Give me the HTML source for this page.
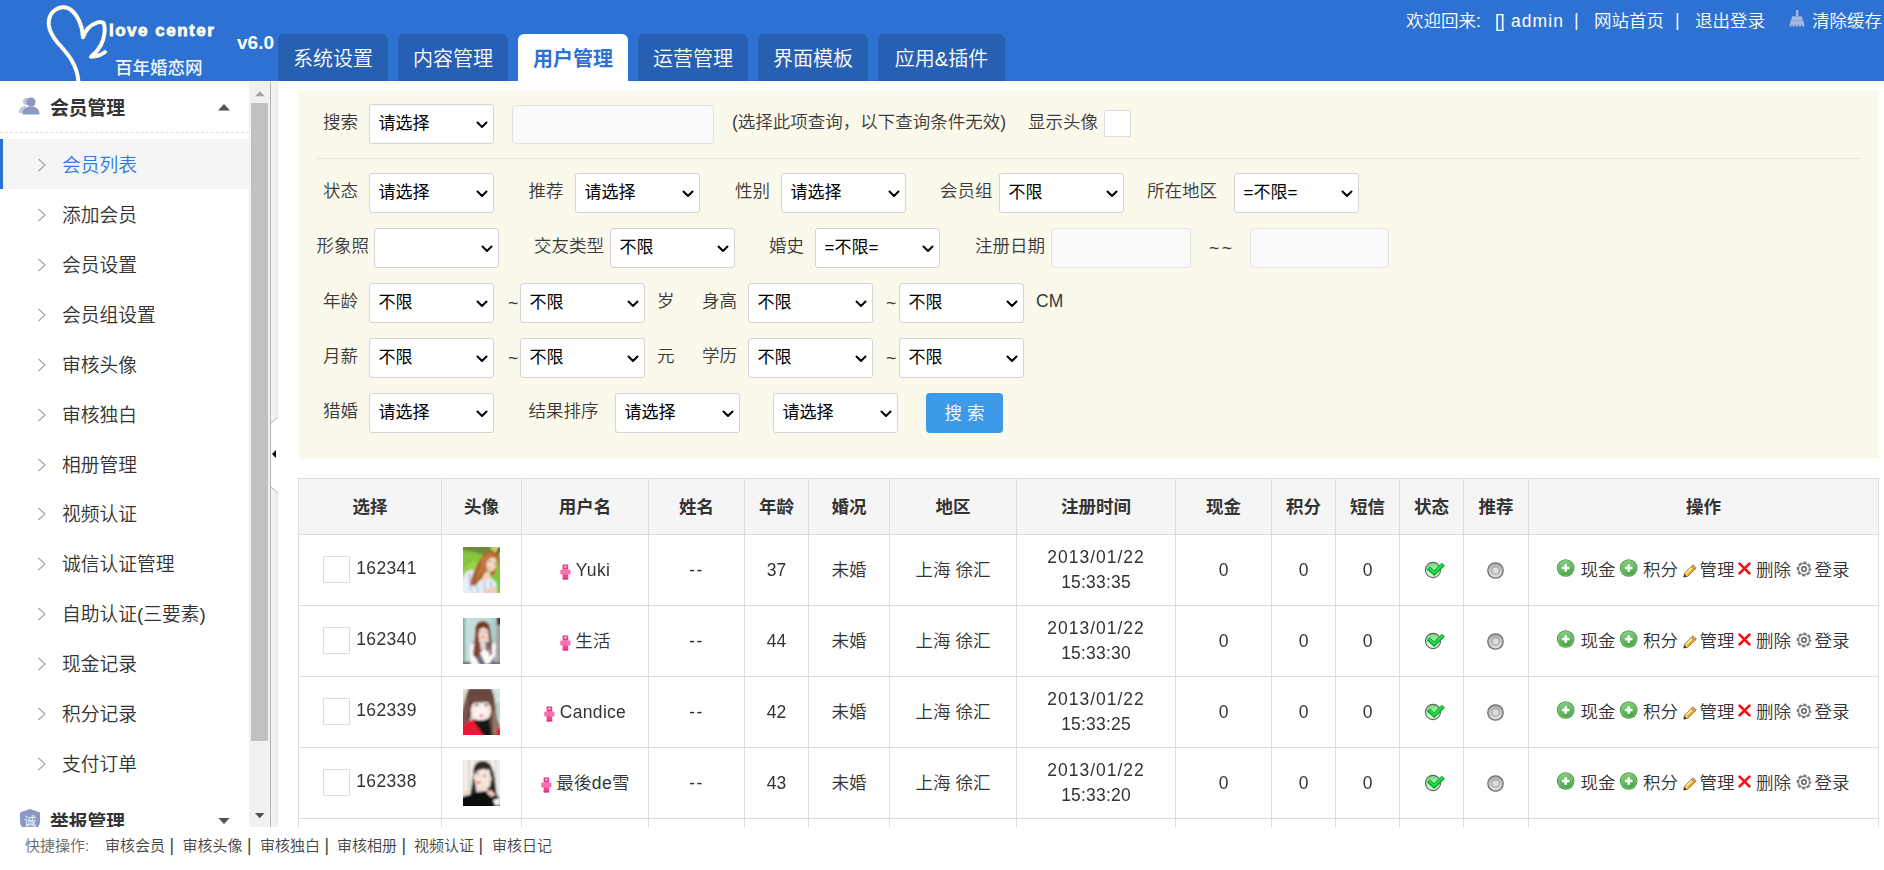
<!DOCTYPE html>
<html lang="zh-CN">
<head>
<meta charset="utf-8">
<title>百年婚恋网 - 会员管理</title>
<style>
*{box-sizing:border-box;margin:0;padding:0}
html,body{width:1884px;height:870px;overflow:hidden;background:#fff}
body{position:relative;font-family:"Liberation Sans","Noto Sans CJK SC",sans-serif;font-size:17.5px;color:#444;line-height:1;font-weight:350}
a{color:inherit;text-decoration:none}
.abs{position:absolute}
#hd{position:absolute;left:0;top:0;width:1884px;height:81px;background:#2d72d2;overflow:hidden}
#hd .tab{position:absolute;top:34px;height:47px;width:110px;background:#2760b3;color:#fff;font-size:20px;line-height:50px;text-align:center;border-radius:6px 6px 0 0;white-space:nowrap}
#hd .tab.on{background:#fff;color:#2d72d2;font-weight:bold}
#hd .top{position:absolute;top:9px;color:#fff;font-size:17.5px;line-height:24px;white-space:nowrap}
.logo1{left:109px;top:21px;font-size:17px;font-weight:bold;color:#fffcec;letter-spacing:1.5px;-webkit-text-stroke:.8px #fffcec;line-height:20px;white-space:nowrap}
.logo2{left:115px;top:57px;font-size:17.5px;font-weight:500;color:#f4f7fc;line-height:22px;white-space:nowrap}
.ver{left:237px;top:32px;font-size:19px;font-weight:bold;color:#fff;line-height:22px;white-space:nowrap}
#side{position:absolute;left:0;top:81px;width:249px;height:746px;background:#fff;overflow:hidden}
#side .tt{position:absolute;left:50px;font-size:18.75px;font-weight:bold;color:#333;line-height:28px;white-space:nowrap}
#side .it{position:absolute;left:0;width:249px;height:50px;line-height:53px;padding-left:62px;font-size:18.75px;color:#333;white-space:nowrap}
#side .it.on{background:#f5f5f5;color:#2d7be0;border-left:3px solid #2d72d2;padding-left:59px}
#side .it svg{position:absolute;left:37px;top:19px}
#side .it.on svg{left:34px}
#sb{position:absolute;left:249px;top:82px;width:21px;height:745px;background:#f1f1f1}
#sb .th{position:absolute;left:2px;top:21px;width:17px;height:638px;background:#c1c1c1}
#split{position:absolute;left:270px;top:82px;width:8px;height:745px;background:linear-gradient(to right,#f5f5f8,#e9ecf1);border-left:1px solid #b3b3b3}
#main{position:absolute;left:278px;top:81px;width:1606px;height:746px;overflow:hidden;background:#fff}
#pn{position:absolute;left:20px;top:10px;width:1581px;height:368px;background:#fbf9ec}
.lb{position:absolute;font-size:17.5px;color:#3a3a3a;line-height:24px;white-space:nowrap}
.sel{position:absolute;width:125px;height:40px;background:#fff;border:1px solid #d4d4d4;border-radius:3px;font-size:17px;color:#000;line-height:38px;font-weight:400;padding-left:8.5px;white-space:nowrap}
.sel svg{position:absolute;right:5px;top:16px}
.inp{position:absolute;height:38px;background:#fbfbfb;border:1px solid #e2e2e2;border-radius:4px}
.cb{position:absolute;width:27px;height:27px;background:#fff;border:1px solid #ddd;border-radius:2px}
.btn{position:absolute;width:77px;height:40px;background:#3d9ae8;color:#fff;border-radius:4px;font-size:17.5px;line-height:40px;text-align:center;white-space:pre}
#tb{position:absolute;left:20px;top:397px;border-collapse:collapse;table-layout:fixed;width:1580px}
#tb th,#tb td{border:1px solid #ddd;text-align:center;vertical-align:middle;font-size:17.5px;color:#333;padding:0;line-height:25px;white-space:nowrap}
#tb th{height:56px;background:#f5f5f5;font-weight:bold}
#tb td{height:71px;background:#fff}
#tb .ic{vertical-align:middle;display:inline-block}
#tb .av{vertical-align:middle;display:inline-block;overflow:hidden}
#tb .cb2{display:inline-block;width:27px;height:27px;background:#fff;border:1px solid #ddd;vertical-align:middle;margin-right:6px;position:relative;top:-1px;left:0}
#tb .uid{vertical-align:middle;letter-spacing:.35px;position:relative;top:-2px;left:0}
#tb .nm{vertical-align:middle;margin-left:5px;letter-spacing:.3px}
#tb .op a{vertical-align:middle}
#ft{position:absolute;left:0;top:827px;width:1884px;height:43px;background:#fff;font-size:15px;line-height:20px;color:#444;white-space:nowrap}
#tb th span{position:relative;top:1px}
#tb .opw{position:relative;width:349px;height:70px;text-align:left}
#tb .opw a{line-height:25px}
#tb .fem{position:relative;top:1.5px;left:.5px}
#hd .top.pipe{font-size:19px;top:7.5px;opacity:.92}
#tb .n{display:inline-block;transform:scaleY(1.09);transform-origin:50% 58%}
#tb .okk{position:relative;top:-1px;left:.5px}
#tb .grr{position:relative;top:-.5px;left:-.5px}

</style>
</head>
<body>
<svg width="0" height="0" style="position:absolute"><defs><linearGradient id="gp" x1="0" y1="0" x2="0.300" y2="1"><stop offset="0" stop-color="#8fd389"/><stop offset="1" stop-color="#4aa648"/></linearGradient><linearGradient id="gc" x1="0" y1="0" x2="0" y2="1"><stop offset="0" stop-color="#6fdc78"/><stop offset="1" stop-color="#eefaee"/></linearGradient><linearGradient id="gg" x1="0" y1="0" x2="0" y2="1"><stop offset="0" stop-color="#aaaaaa"/><stop offset="1" stop-color="#e4e4e4"/></linearGradient><filter id="bl" x="0" y="0" width="1" height="1"><feGaussianBlur stdDeviation="0.800"/></filter></defs></svg>
<div id="hd">
<svg class="abs" style="left:40px;top:0" width="80" height="81" viewBox="40 0 80 81"><path d="M78.500 82 C77 62 64 50 57.500 42.500 C53 37 49.500 31 48.800 25 C48 15 54 8.500 62 7.200 C69 6.500 75 12 79 20.500 C81.500 26 82.800 32 83 37.300 C85 31 90 25 97 22.600 C100 21.800 103 22.300 104 24 C105.500 29 104.500 38 101 45 C98 50.500 94 54.500 91 56.800 C96 56.800 101 55 105 52" fill="none" stroke="#fffcec" stroke-width="4" stroke-linecap="round" stroke-linejoin="round"/></svg>
<div class="abs logo1">love center</div>
<div class="abs logo2">百年婚恋网</div>
<div class="abs ver">v6.0</div>
<a class="tab" style="left:278px;width:110px">系统设置</a>
<a class="tab" style="left:398px;width:110px">内容管理</a>
<a class="tab on" style="left:518px;width:110px">用户管理</a>
<a class="tab" style="left:638px;width:110px">运营管理</a>
<a class="tab" style="left:758px;width:110px">界面模板</a>
<a class="tab" style="left:878px;width:127px">应用&amp;插件</a>
<div class="top" style="left:1406px">欢迎回来:</div>
<div class="top" style="left:1495px">[]</div>
<div class="top" style="left:1511px;letter-spacing:1.05px">admin</div>
<div class="top pipe" style="left:1574px">|</div>
<a class="top" style="left:1594px">网站首页</a>
<div class="top pipe" style="left:1675px">|</div>
<a class="top" style="left:1695px">退出登录</a>
<svg class="abs" style="left:1789px;top:10px" width="16" height="17" viewBox="0 0 16 17"><path d="M7 0h2.4v6H7z M3.2 6.2h9.6l1.2 4H2z M1.6 10.6h12.8l1.2 6h-2.2l-.6-3-.6 3h-2.2l-.4-3-.6 3H6.8l-.4-3-.8 3H3.4l-.2-3-.8 3H.4z" fill="#a3b8df"/></svg>
<a class="top" style="left:1812px">清除缓存</a>
</div>
<div id="side">
<svg class="abs" style="left:18px;top:15px" width="22" height="19" viewBox="0 0 22 19"><g fill="#8b97c4"><circle cx="8.5" cy="5.5" r="3.6" opacity=".55"/><path d="M1 17c0-5 3-7 7-7v7z" opacity=".55"/><circle cx="13" cy="6" r="4.6"/><path d="M4.5 18.5c0-5.5 3.5-8 8.5-8s8.500 2.500 8.500 8z"/></g></svg>
<div class="tt" style="top:14px">会员管理</div>
<svg class="abs" style="left:218px;top:23px" width="12" height="7" viewBox="0 0 12 7"><path d="M0 6.500 L6 0 L12 6.500z" fill="#555"/></svg>
<div class="abs" style="left:0;top:51px;width:249px;height:0;border-top:1px dashed #ddd"></div>
<a class="it on" style="top:58px"><svg width="10" height="14" viewBox="0 0 10 14"><path d="M1.5 1 L8 7 L1.5 13" fill="none" stroke="#a59d98" stroke-width="1.050"/></svg>会员列表</a>
<a class="it" style="top:108px"><svg width="10" height="14" viewBox="0 0 10 14"><path d="M1.5 1 L8 7 L1.5 13" fill="none" stroke="#a59d98" stroke-width="1.050"/></svg>添加会员</a>
<a class="it" style="top:158px"><svg width="10" height="14" viewBox="0 0 10 14"><path d="M1.5 1 L8 7 L1.5 13" fill="none" stroke="#a59d98" stroke-width="1.050"/></svg>会员设置</a>
<a class="it" style="top:208px"><svg width="10" height="14" viewBox="0 0 10 14"><path d="M1.5 1 L8 7 L1.5 13" fill="none" stroke="#a59d98" stroke-width="1.050"/></svg>会员组设置</a>
<a class="it" style="top:258px"><svg width="10" height="14" viewBox="0 0 10 14"><path d="M1.5 1 L8 7 L1.5 13" fill="none" stroke="#a59d98" stroke-width="1.050"/></svg>审核头像</a>
<a class="it" style="top:308px"><svg width="10" height="14" viewBox="0 0 10 14"><path d="M1.5 1 L8 7 L1.5 13" fill="none" stroke="#a59d98" stroke-width="1.050"/></svg>审核独白</a>
<a class="it" style="top:358px"><svg width="10" height="14" viewBox="0 0 10 14"><path d="M1.5 1 L8 7 L1.5 13" fill="none" stroke="#a59d98" stroke-width="1.050"/></svg>相册管理</a>
<a class="it" style="top:407px"><svg width="10" height="14" viewBox="0 0 10 14"><path d="M1.5 1 L8 7 L1.5 13" fill="none" stroke="#a59d98" stroke-width="1.050"/></svg>视频认证</a>
<a class="it" style="top:457px"><svg width="10" height="14" viewBox="0 0 10 14"><path d="M1.5 1 L8 7 L1.5 13" fill="none" stroke="#a59d98" stroke-width="1.050"/></svg>诚信认证管理</a>
<a class="it" style="top:507px"><svg width="10" height="14" viewBox="0 0 10 14"><path d="M1.5 1 L8 7 L1.5 13" fill="none" stroke="#a59d98" stroke-width="1.050"/></svg>自助认证(三要素)</a>
<a class="it" style="top:557px"><svg width="10" height="14" viewBox="0 0 10 14"><path d="M1.5 1 L8 7 L1.5 13" fill="none" stroke="#a59d98" stroke-width="1.050"/></svg>现金记录</a>
<a class="it" style="top:607px"><svg width="10" height="14" viewBox="0 0 10 14"><path d="M1.5 1 L8 7 L1.5 13" fill="none" stroke="#a59d98" stroke-width="1.050"/></svg>积分记录</a>
<a class="it" style="top:657px"><svg width="10" height="14" viewBox="0 0 10 14"><path d="M1.5 1 L8 7 L1.5 13" fill="none" stroke="#a59d98" stroke-width="1.050"/></svg>支付订单</a>
 <svg class="abs" style="left:19px;top:728px" width="22" height="24" viewBox="0 0 22 24"><path d="M11 0 L21 3.500 V12 C21 18 16 22 11 24 C6 22 1 18 1 12 V3.500z" fill="#8b97c4"/><text x="11" y="17" font-size="12" fill="#fff" text-anchor="middle" font-family="Liberation Sans, Noto Sans CJK SC, sans-serif">诚</text></svg>
<div class="tt" style="top:728px">举报管理</div>
<svg class="abs" style="left:218px;top:737px" width="12" height="7" viewBox="0 0 12 7"><path d="M0.300 0 L11.700 0 L6 6z" fill="#555"/></svg>
</div>
<div id="sb"><svg class="abs" style="left:5.500px;top:9px" width="10" height="6" viewBox="0 0 10 6"><path d="M0.200 5.200 L4.900 0.200 L9.600 5.200z" fill="#a3a3a3"/></svg><div class="th"></div><svg class="abs" style="left:6px;top:731px" width="10" height="6" viewBox="0 0 10 6"><path d="M0 0 L9.400 0 L4.700 5.300z" fill="#505050"/></svg></div>
<div id="split"><svg class="abs" style="left:0;top:335px" width="7" height="76" viewBox="0 0 7 76"><path d="M0 6 L7 0 V76 L0 70z" fill="#fff"/><path d="M0 6 L7 0 M0 70 L7 76" stroke="#a9b7c6" stroke-width="1" fill="none"/><path d="M1 37 L5 33 V41z" fill="#000"/></svg></div>
<div id="main">
<div id="pn"></div>
<div class="lb" style="left:45px;top:29px;">搜索</div>
<div class="sel" style="left:91px;top:23px;width:125px">请选择<svg width="12" height="8" viewBox="0 0 12 8"><path d="M1.5 1.5 L6 6 L10.5 1.5" fill="none" stroke="#000" stroke-width="2" stroke-linecap="round" stroke-linejoin="round"/></svg></div>
<div class="inp" style="left:234px;top:24px;width:202px;height:39px"></div>
<div class="lb" style="left:454px;top:29px;">(选择此项查询，以下查询条件无效)</div>
<div class="lb" style="left:750px;top:29px;">显示头像</div>
<div class="cb" style="left:826px;top:29px"></div>
<div class="abs" style="left:39px;top:77px;width:1544px;height:1px;background:#e8e6dc"></div>
<div class="lb" style="left:45px;top:98px;">状态</div>
<div class="sel" style="left:91px;top:92px;width:125px">请选择<svg width="12" height="8" viewBox="0 0 12 8"><path d="M1.5 1.5 L6 6 L10.5 1.5" fill="none" stroke="#000" stroke-width="2" stroke-linecap="round" stroke-linejoin="round"/></svg></div>
<div class="lb" style="left:250.5px;top:98px;">推荐</div>
<div class="sel" style="left:297px;top:92px;width:125px">请选择<svg width="12" height="8" viewBox="0 0 12 8"><path d="M1.5 1.5 L6 6 L10.5 1.5" fill="none" stroke="#000" stroke-width="2" stroke-linecap="round" stroke-linejoin="round"/></svg></div>
<div class="lb" style="left:457px;top:98px;">性别</div>
<div class="sel" style="left:503px;top:92px;width:125px">请选择<svg width="12" height="8" viewBox="0 0 12 8"><path d="M1.5 1.5 L6 6 L10.5 1.5" fill="none" stroke="#000" stroke-width="2" stroke-linecap="round" stroke-linejoin="round"/></svg></div>
<div class="lb" style="left:662px;top:98px;">会员组</div>
<div class="sel" style="left:721px;top:92px;width:125px">不限<svg width="12" height="8" viewBox="0 0 12 8"><path d="M1.5 1.5 L6 6 L10.5 1.5" fill="none" stroke="#000" stroke-width="2" stroke-linecap="round" stroke-linejoin="round"/></svg></div>
<div class="lb" style="left:869px;top:98px;">所在地区</div>
<div class="sel" style="left:956px;top:92px;width:125px">=不限=<svg width="12" height="8" viewBox="0 0 12 8"><path d="M1.5 1.5 L6 6 L10.5 1.5" fill="none" stroke="#000" stroke-width="2" stroke-linecap="round" stroke-linejoin="round"/></svg></div>
<div class="lb" style="left:38.5px;top:153px;">形象照</div>
<div class="sel" style="left:96px;top:147px;width:125px"><svg width="12" height="8" viewBox="0 0 12 8"><path d="M1.5 1.5 L6 6 L10.5 1.5" fill="none" stroke="#000" stroke-width="2" stroke-linecap="round" stroke-linejoin="round"/></svg></div>
<div class="lb" style="left:256px;top:153px;">交友类型</div>
<div class="sel" style="left:332px;top:147px;width:125px">不限<svg width="12" height="8" viewBox="0 0 12 8"><path d="M1.5 1.5 L6 6 L10.5 1.5" fill="none" stroke="#000" stroke-width="2" stroke-linecap="round" stroke-linejoin="round"/></svg></div>
<div class="lb" style="left:491px;top:153px;">婚史</div>
<div class="sel" style="left:537px;top:147px;width:125px">=不限=<svg width="12" height="8" viewBox="0 0 12 8"><path d="M1.5 1.5 L6 6 L10.5 1.5" fill="none" stroke="#000" stroke-width="2" stroke-linecap="round" stroke-linejoin="round"/></svg></div>
<div class="lb" style="left:697px;top:153px;">注册日期</div>
<div class="inp" style="left:773px;top:147px;width:140px;height:40px"></div>
<div class="lb" style="left:931px;top:155px;letter-spacing:2.5px">~~</div>
<div class="inp" style="left:972px;top:147px;width:139px;height:40px"></div>
<div class="lb" style="left:45px;top:208px;">年龄</div>
<div class="sel" style="left:91px;top:202px;width:125px">不限<svg width="12" height="8" viewBox="0 0 12 8"><path d="M1.5 1.5 L6 6 L10.5 1.5" fill="none" stroke="#000" stroke-width="2" stroke-linecap="round" stroke-linejoin="round"/></svg></div>
<div class="lb" style="left:230px;top:210px;">~</div>
<div class="sel" style="left:242px;top:202px;width:125px">不限<svg width="12" height="8" viewBox="0 0 12 8"><path d="M1.5 1.5 L6 6 L10.5 1.5" fill="none" stroke="#000" stroke-width="2" stroke-linecap="round" stroke-linejoin="round"/></svg></div>
<div class="lb" style="left:379px;top:208px;">岁</div>
<div class="lb" style="left:424px;top:208px;">身高</div>
<div class="sel" style="left:470px;top:202px;width:125px">不限<svg width="12" height="8" viewBox="0 0 12 8"><path d="M1.5 1.5 L6 6 L10.5 1.5" fill="none" stroke="#000" stroke-width="2" stroke-linecap="round" stroke-linejoin="round"/></svg></div>
<div class="lb" style="left:608px;top:210px;">~</div>
<div class="sel" style="left:621px;top:202px;width:125px">不限<svg width="12" height="8" viewBox="0 0 12 8"><path d="M1.5 1.5 L6 6 L10.5 1.5" fill="none" stroke="#000" stroke-width="2" stroke-linecap="round" stroke-linejoin="round"/></svg></div>
<div class="lb" style="left:758px;top:208px;">CM</div>
<div class="lb" style="left:45px;top:263px;">月薪</div>
<div class="sel" style="left:91px;top:257px;width:125px">不限<svg width="12" height="8" viewBox="0 0 12 8"><path d="M1.5 1.5 L6 6 L10.5 1.5" fill="none" stroke="#000" stroke-width="2" stroke-linecap="round" stroke-linejoin="round"/></svg></div>
<div class="lb" style="left:230px;top:265px;">~</div>
<div class="sel" style="left:242px;top:257px;width:125px">不限<svg width="12" height="8" viewBox="0 0 12 8"><path d="M1.5 1.5 L6 6 L10.5 1.5" fill="none" stroke="#000" stroke-width="2" stroke-linecap="round" stroke-linejoin="round"/></svg></div>
<div class="lb" style="left:379px;top:263px;">元</div>
<div class="lb" style="left:424px;top:263px;">学历</div>
<div class="sel" style="left:470px;top:257px;width:125px">不限<svg width="12" height="8" viewBox="0 0 12 8"><path d="M1.5 1.5 L6 6 L10.5 1.5" fill="none" stroke="#000" stroke-width="2" stroke-linecap="round" stroke-linejoin="round"/></svg></div>
<div class="lb" style="left:608px;top:265px;">~</div>
<div class="sel" style="left:621px;top:257px;width:125px">不限<svg width="12" height="8" viewBox="0 0 12 8"><path d="M1.5 1.5 L6 6 L10.5 1.5" fill="none" stroke="#000" stroke-width="2" stroke-linecap="round" stroke-linejoin="round"/></svg></div>
<div class="lb" style="left:45px;top:318px;">猎婚</div>
<div class="sel" style="left:91px;top:312px;width:125px">请选择<svg width="12" height="8" viewBox="0 0 12 8"><path d="M1.5 1.5 L6 6 L10.5 1.5" fill="none" stroke="#000" stroke-width="2" stroke-linecap="round" stroke-linejoin="round"/></svg></div>
<div class="lb" style="left:250.5px;top:318px;">结果排序</div>
<div class="sel" style="left:337px;top:312px;width:125px">请选择<svg width="12" height="8" viewBox="0 0 12 8"><path d="M1.5 1.5 L6 6 L10.5 1.5" fill="none" stroke="#000" stroke-width="2" stroke-linecap="round" stroke-linejoin="round"/></svg></div>
<div class="sel" style="left:495px;top:312px;width:125px">请选择<svg width="12" height="8" viewBox="0 0 12 8"><path d="M1.5 1.5 L6 6 L10.5 1.5" fill="none" stroke="#000" stroke-width="2" stroke-linecap="round" stroke-linejoin="round"/></svg></div>
<div class="btn" style="left:648px;top:312px">搜 索</div>
<table id="tb"><colgroup><col style="width:143px"><col style="width:80px"><col style="width:127px"><col style="width:96px"><col style="width:64px"><col style="width:81px"><col style="width:127px"><col style="width:159px"><col style="width:96px"><col style="width:64px"><col style="width:64px"><col style="width:64px"><col style="width:65px"><col style="width:350px"></colgroup>
<tr><th><span>选择</span></th><th><span>头像</span></th><th><span>用户名</span></th><th><span>姓名</span></th><th><span>年龄</span></th><th><span>婚况</span></th><th><span>地区</span></th><th><span>注册时间</span></th><th><span>现金</span></th><th><span>积分</span></th><th><span>短信</span></th><th><span>状态</span></th><th><span>推荐</span></th><th><span>操作</span></th></tr>
<tr><td><span class="cb2"></span><span class="uid n">162341</span></td><td><svg class="av" width="37" height="46" viewBox="0 0 37 46"><g filter="url(#bl)"><rect x="-2" y="-2" width="41" height="50" fill="#86c53d"/><path d="M-2 -2 H39 V7 L24 9 L10 5 L-2 3z" fill="#6f8a38"/><path d="M26 -2 H39 V10 L30 4z" fill="#cfd066"/><path d="M37 -1 L33 6 L35 8 L38 2z" fill="#141410"/><path d="M0 22 L12 12 L16 22 L4 32z" fill="#9ad24a"/><path d="M30 28 H39 V48 H30z" fill="#7ccc3a"/><path d="M2 26 C6 22 12 22 14 26 L18 33 L28 31 L33 35 L34 48 H-2 V34z" fill="#e6eef4"/><path d="M6 26 L8 44 M13 30 L15 46 M21 34 L22 46 M28 34 L29 46" stroke="#a9c9e2" stroke-width="1.600" fill="none"/><path d="M17 26 L27 25 L28 32 L19 34z" fill="#f4d3be"/><path d="M22 42 L34 40 L34 47 L22 47z" fill="#f0cdb8"/><path d="M22 5 L30 4 L36 9 L36 15 L33 21 L31 28 L28 30 L27 24 L24 22 L19 31 L12 39 L7 38 L9 29 L15 16z" fill="#b3622e"/><path d="M24 8 L14 30 M27 9 L19 26 M21 10 L11 34" stroke="#d08a52" stroke-width="1.300" fill="none"/><path d="M18 16 L10 36 M29 7 L25 18" stroke="#8a4820" stroke-width="1.200" fill="none"/><ellipse cx="28.600" cy="17" rx="4.900" ry="7.400" transform="rotate(14 28.600 17)" fill="#f7dcc9"/><path d="M22 8 L30 6 L33 11 L27 11 L23 16z" fill="#c07a3e"/><circle cx="27" cy="14.600" r=".8" fill="#4a2a20"/><circle cx="31.600" cy="16.400" r=".8" fill="#4a2a20"/><ellipse cx="26.600" cy="21.300" rx="1.600" ry=".7" fill="#e88a8a"/></g></svg></td><td><svg class="ic fem" width="11" height="16" viewBox="0 0 11 16"><rect x="2.6" y="0.400" width="5.600" height="5.400" rx=".8" fill="#e23a8c"/><rect x="4.200" y="1.700" width="2.400" height="1.800" rx=".6" fill="#ffd9ea"/><rect x="0.300" y="5.400" width="10.200" height="5.200" rx="1" fill="#f970b2"/><rect x="2.600" y="10.200" width="5.600" height="5.200" rx=".6" fill="#ec4797"/><rect x="2.600" y="14.200" width="5.600" height="1.200" fill="#dc2f80"/></svg><span class="nm n">Yuki</span></td><td><span class="n" style="letter-spacing:1.5px">--</span></td><td><span class="n">37</span></td><td>未婚</td><td>上海 徐汇</td><td><span class="n" style="letter-spacing:1px">2013/01/22</span><br><span class="n" style="letter-spacing:.2px">15:33:35</span></td><td><span class="n">0</span></td><td><span class="n">0</span></td><td><span class="n">0</span></td><td><svg class="ic okk" width="25" height="18" viewBox="0 0 25 18"><circle cx="13" cy="9" r="7.600" fill="url(#gc)" stroke="#5d685d" stroke-width="1.100"/><path d="M8.300 6.700 L14.200 12.200 L23.400 3.200" fill="none" stroke="#1d8f35" stroke-width="4.200"/><path d="M8.900 6.900 L14.200 11.800 L22.800 3.400" fill="none" stroke="#0fe640" stroke-width="2.300"/></svg></td><td><svg class="ic grr" width="17" height="17" viewBox="0 0 17 17"><circle cx="8.500" cy="8.500" r="7.700" fill="url(#gg)" stroke="#6f6f6f" stroke-width="1.300"/><circle cx="8.500" cy="8.500" r="3.700" fill="#dedede" stroke="#aeaeae" stroke-width="1.300"/></svg></td><td class="op"><div class="opw"><svg class="abs" style="left:27px;top:24px" width="20" height="19" viewBox="0 0 20 19"><circle cx="9.700" cy="9" r="8.800" fill="#4a9a47"/><circle cx="9.700" cy="9" r="7.500" fill="url(#gp)"/><circle cx="9.700" cy="9" r="7.500" fill="none" stroke="#a5dc9f" stroke-width=".7" opacity=".7"/><path d="M8.400 5.200h2.600v2.500h2.500v2.600h-2.500v2.500h-2.600v-2.500h-2.500v-2.600h2.500z" fill="#fff"/></svg><a class="abs" style="left:51.5px;top:23px">现金</a><svg class="abs" style="left:90px;top:24px" width="20" height="19" viewBox="0 0 20 19"><circle cx="9.700" cy="9" r="8.800" fill="#4a9a47"/><circle cx="9.700" cy="9" r="7.500" fill="url(#gp)"/><circle cx="9.700" cy="9" r="7.500" fill="none" stroke="#a5dc9f" stroke-width=".7" opacity=".7"/><path d="M8.400 5.200h2.600v2.500h2.500v2.600h-2.500v2.500h-2.600v-2.500h-2.500v-2.600h2.500z" fill="#fff"/></svg><a class="abs" style="left:114px;top:23px">积分</a><svg class="abs" style="left:153.5px;top:28.5px" width="14" height="14" viewBox="0 0 14 14"><path d="M0.800 13 L1.600 9.200 L8.600 2.200 L11.800 5.400 L4.800 12.300z" fill="#f5c44c" stroke="#9a7324" stroke-width="1"/><path d="M3 9.400 L8.800 3.600" stroke="#fff4c4" stroke-width="1.300"/><path d="M4.600 11 L10.400 5.200" stroke="#e6a52e" stroke-width="1.200"/><path d="M8.600 2.200 L10.100 0.800 L13.200 3.900 L11.800 5.400z" fill="#f2a9a0" stroke="#9a7324" stroke-width=".9"/><path d="M0.700 13.200 L1.500 10.200 L3.700 12.400z" fill="#2e2e22"/></svg><a class="abs" style="left:170.5px;top:23px">管理</a><svg class="abs" style="left:208.8px;top:27px" width="13" height="13" viewBox="0 0 13 13"><path d="M1.600 1.600 L11.400 11.400 M11.400 1.600 L1.600 11.400" stroke="#fb0d14" stroke-width="2.700" stroke-linecap="round"/></svg><a class="abs" style="left:227px;top:23px">删除</a><svg class="abs" style="left:266.5px;top:26.3px" width="16" height="16" viewBox="0 0 16 16"><circle cx="8" cy="8" r="6.400" fill="none" stroke="#7c7c7c" stroke-width="2" stroke-dasharray="3.300 1.730" stroke-dashoffset="1.600"/><circle cx="8" cy="8" r="5.500" fill="#f6f6f6" stroke="#6e6e6e" stroke-width="1"/><circle cx="8" cy="8" r="2.200" fill="#fdfdfd" stroke="#5a5a5a" stroke-width="1.400"/></svg><a class="abs" style="left:285.5px;top:23px">登录</a></div></td></tr>
<tr><td><span class="cb2"></span><span class="uid n">162340</span></td><td><svg class="av" width="37" height="46" viewBox="0 0 37 46"><g filter="url(#bl)"><rect x="-2" y="-2" width="41" height="50" fill="#b9d8d4"/><rect x="-2" y="-2" width="4" height="50" fill="#88a9a6"/><rect x="3" y="1" width="22" height="40" fill="#c6e0dc"/><rect x="27" y="-2" width="6" height="26" fill="#a9d2cd"/><rect x="33" y="-2" width="6" height="50" fill="#a3a39d"/><rect x="34" y="-2" width="5" height="9" fill="#3a3030"/><path d="M-2 44 H39 V48 H-2z" fill="#6f6a66"/><path d="M9 24 L30 24 L32 48 H8z" fill="#6f6c7d"/><path d="M7 27 L12 24 L13 40 L17 48 H8 L7 38z" fill="#fbf9fa"/><path d="M28 24 L33 27 L32 37 L28 44 L23 47 L17 35 L21 31 L26 34z" fill="#fbf9fa"/><path d="M20 3 C13 3 12 9 12 15 L11 27 L10 37 L13 40 L17 37 L16 23 L16 13 L25 12 L26 23 L27 31 L26 38 L29 36 L29 24 L27 10 C26 5 24 3 20 3z" fill="#7b3d29"/><path d="M13 14 L12 36 M27 14 L28 34" stroke="#9a5038" stroke-width="1.300" fill="none"/><ellipse cx="20.300" cy="16" rx="4.900" ry="6.600" fill="#f6d8cb"/><path d="M14 12 C16 5 25 5 27 12 C23 8 18 9 14 12z" fill="#6a3424"/><path d="M17 23 L22 22 L23 31 L18 32z" fill="#f4d2c2"/><circle cx="17.800" cy="13.800" r=".8" fill="#4a5a7a"/><circle cx="22.600" cy="13.800" r=".8" fill="#4a5a7a"/><ellipse cx="20" cy="19.300" rx="1.700" ry=".7" fill="#d85a6a"/></g></svg></td><td><svg class="ic fem" width="11" height="16" viewBox="0 0 11 16"><rect x="2.6" y="0.400" width="5.600" height="5.400" rx=".8" fill="#e23a8c"/><rect x="4.200" y="1.700" width="2.400" height="1.800" rx=".6" fill="#ffd9ea"/><rect x="0.300" y="5.400" width="10.200" height="5.200" rx="1" fill="#f970b2"/><rect x="2.600" y="10.200" width="5.600" height="5.200" rx=".6" fill="#ec4797"/><rect x="2.600" y="14.200" width="5.600" height="1.200" fill="#dc2f80"/></svg><span class="nm">生活</span></td><td><span class="n" style="letter-spacing:1.5px">--</span></td><td><span class="n">44</span></td><td>未婚</td><td>上海 徐汇</td><td><span class="n" style="letter-spacing:1px">2013/01/22</span><br><span class="n" style="letter-spacing:.2px">15:33:30</span></td><td><span class="n">0</span></td><td><span class="n">0</span></td><td><span class="n">0</span></td><td><svg class="ic okk" width="25" height="18" viewBox="0 0 25 18"><circle cx="13" cy="9" r="7.600" fill="url(#gc)" stroke="#5d685d" stroke-width="1.100"/><path d="M8.300 6.700 L14.200 12.200 L23.400 3.200" fill="none" stroke="#1d8f35" stroke-width="4.200"/><path d="M8.900 6.900 L14.200 11.800 L22.800 3.400" fill="none" stroke="#0fe640" stroke-width="2.300"/></svg></td><td><svg class="ic grr" width="17" height="17" viewBox="0 0 17 17"><circle cx="8.500" cy="8.500" r="7.700" fill="url(#gg)" stroke="#6f6f6f" stroke-width="1.300"/><circle cx="8.500" cy="8.500" r="3.700" fill="#dedede" stroke="#aeaeae" stroke-width="1.300"/></svg></td><td class="op"><div class="opw"><svg class="abs" style="left:27px;top:24px" width="20" height="19" viewBox="0 0 20 19"><circle cx="9.700" cy="9" r="8.800" fill="#4a9a47"/><circle cx="9.700" cy="9" r="7.500" fill="url(#gp)"/><circle cx="9.700" cy="9" r="7.500" fill="none" stroke="#a5dc9f" stroke-width=".7" opacity=".7"/><path d="M8.400 5.200h2.600v2.500h2.500v2.600h-2.500v2.500h-2.600v-2.500h-2.500v-2.600h2.500z" fill="#fff"/></svg><a class="abs" style="left:51.5px;top:23px">现金</a><svg class="abs" style="left:90px;top:24px" width="20" height="19" viewBox="0 0 20 19"><circle cx="9.700" cy="9" r="8.800" fill="#4a9a47"/><circle cx="9.700" cy="9" r="7.500" fill="url(#gp)"/><circle cx="9.700" cy="9" r="7.500" fill="none" stroke="#a5dc9f" stroke-width=".7" opacity=".7"/><path d="M8.400 5.200h2.600v2.500h2.500v2.600h-2.500v2.500h-2.600v-2.500h-2.500v-2.600h2.500z" fill="#fff"/></svg><a class="abs" style="left:114px;top:23px">积分</a><svg class="abs" style="left:153.5px;top:28.5px" width="14" height="14" viewBox="0 0 14 14"><path d="M0.800 13 L1.600 9.200 L8.600 2.200 L11.800 5.400 L4.800 12.300z" fill="#f5c44c" stroke="#9a7324" stroke-width="1"/><path d="M3 9.400 L8.800 3.600" stroke="#fff4c4" stroke-width="1.300"/><path d="M4.600 11 L10.400 5.200" stroke="#e6a52e" stroke-width="1.200"/><path d="M8.600 2.200 L10.100 0.800 L13.200 3.900 L11.800 5.400z" fill="#f2a9a0" stroke="#9a7324" stroke-width=".9"/><path d="M0.700 13.200 L1.500 10.200 L3.700 12.400z" fill="#2e2e22"/></svg><a class="abs" style="left:170.5px;top:23px">管理</a><svg class="abs" style="left:208.8px;top:27px" width="13" height="13" viewBox="0 0 13 13"><path d="M1.600 1.600 L11.400 11.400 M11.400 1.600 L1.600 11.400" stroke="#fb0d14" stroke-width="2.700" stroke-linecap="round"/></svg><a class="abs" style="left:227px;top:23px">删除</a><svg class="abs" style="left:266.5px;top:26.3px" width="16" height="16" viewBox="0 0 16 16"><circle cx="8" cy="8" r="6.400" fill="none" stroke="#7c7c7c" stroke-width="2" stroke-dasharray="3.300 1.730" stroke-dashoffset="1.600"/><circle cx="8" cy="8" r="5.500" fill="#f6f6f6" stroke="#6e6e6e" stroke-width="1"/><circle cx="8" cy="8" r="2.200" fill="#fdfdfd" stroke="#5a5a5a" stroke-width="1.400"/></svg><a class="abs" style="left:285.5px;top:23px">登录</a></div></td></tr>
<tr><td><span class="cb2"></span><span class="uid n">162339</span></td><td><svg class="av" width="37" height="46" viewBox="0 0 37 46"><g filter="url(#bl)"><rect x="-2" y="-2" width="41" height="50" fill="#cfe4da"/><rect x="-2" y="-2" width="8" height="24" fill="#d8dccf"/><path d="M32 14 L38 13 L38 30 L33 28z" fill="#b6d6c8"/><path d="M6 -1 L28 -1 C33 8 32 20 34 30 L38 40 L38 48 L22 48 L26 30 L24 16 L10 14 L8 28 L4 36 L-2 38 L-2 28 C1 14 3 6 6 -1z" fill="#6a4740"/><path d="M30 20 L37 36 L37 44 L30 46z" fill="#9a7a70"/><path d="M4 10 L2 34 M31 12 L34 40" stroke="#8a645a" stroke-width="1.600" fill="none"/><ellipse cx="18" cy="21.500" rx="10.200" ry="11.400" fill="#f9e7e1"/><ellipse cx="18" cy="23" rx="7" ry="7" fill="#fdf1ec"/><path d="M7 17 C8 4 28 3 30 16 C25 10 12 11 7 17z" fill="#5f3f38"/><path d="M9 8 L27 7 L28 13 L9 14z" fill="#6e4a42"/><ellipse cx="13.600" cy="16" rx="1.900" ry="1" fill="#3a2a2a"/><ellipse cx="23.200" cy="16" rx="1.900" ry="1" fill="#3a2a2a"/><ellipse cx="18.400" cy="26.700" rx="2.400" ry="1" fill="#e2506c"/><path d="M10 30 C14 32 22 32 26 29 L29 48 L19 48 L12 36z" fill="#151218"/><path d="M-2 38 L9 30 L22 48 L-2 48z" fill="#ee1532"/><path d="M34 38 L39 41 V48 H33z" fill="#e8182f"/></g></svg></td><td><svg class="ic fem" width="11" height="16" viewBox="0 0 11 16"><rect x="2.6" y="0.400" width="5.600" height="5.400" rx=".8" fill="#e23a8c"/><rect x="4.200" y="1.700" width="2.400" height="1.800" rx=".6" fill="#ffd9ea"/><rect x="0.300" y="5.400" width="10.200" height="5.200" rx="1" fill="#f970b2"/><rect x="2.600" y="10.200" width="5.600" height="5.200" rx=".6" fill="#ec4797"/><rect x="2.600" y="14.200" width="5.600" height="1.200" fill="#dc2f80"/></svg><span class="nm n">Candice</span></td><td><span class="n" style="letter-spacing:1.5px">--</span></td><td><span class="n">42</span></td><td>未婚</td><td>上海 徐汇</td><td><span class="n" style="letter-spacing:1px">2013/01/22</span><br><span class="n" style="letter-spacing:.2px">15:33:25</span></td><td><span class="n">0</span></td><td><span class="n">0</span></td><td><span class="n">0</span></td><td><svg class="ic okk" width="25" height="18" viewBox="0 0 25 18"><circle cx="13" cy="9" r="7.600" fill="url(#gc)" stroke="#5d685d" stroke-width="1.100"/><path d="M8.300 6.700 L14.200 12.200 L23.400 3.200" fill="none" stroke="#1d8f35" stroke-width="4.200"/><path d="M8.900 6.900 L14.200 11.800 L22.800 3.400" fill="none" stroke="#0fe640" stroke-width="2.300"/></svg></td><td><svg class="ic grr" width="17" height="17" viewBox="0 0 17 17"><circle cx="8.500" cy="8.500" r="7.700" fill="url(#gg)" stroke="#6f6f6f" stroke-width="1.300"/><circle cx="8.500" cy="8.500" r="3.700" fill="#dedede" stroke="#aeaeae" stroke-width="1.300"/></svg></td><td class="op"><div class="opw"><svg class="abs" style="left:27px;top:24px" width="20" height="19" viewBox="0 0 20 19"><circle cx="9.700" cy="9" r="8.800" fill="#4a9a47"/><circle cx="9.700" cy="9" r="7.500" fill="url(#gp)"/><circle cx="9.700" cy="9" r="7.500" fill="none" stroke="#a5dc9f" stroke-width=".7" opacity=".7"/><path d="M8.400 5.200h2.600v2.500h2.500v2.600h-2.500v2.500h-2.600v-2.500h-2.500v-2.600h2.500z" fill="#fff"/></svg><a class="abs" style="left:51.5px;top:23px">现金</a><svg class="abs" style="left:90px;top:24px" width="20" height="19" viewBox="0 0 20 19"><circle cx="9.700" cy="9" r="8.800" fill="#4a9a47"/><circle cx="9.700" cy="9" r="7.500" fill="url(#gp)"/><circle cx="9.700" cy="9" r="7.500" fill="none" stroke="#a5dc9f" stroke-width=".7" opacity=".7"/><path d="M8.400 5.200h2.600v2.500h2.500v2.600h-2.500v2.500h-2.600v-2.500h-2.500v-2.600h2.500z" fill="#fff"/></svg><a class="abs" style="left:114px;top:23px">积分</a><svg class="abs" style="left:153.5px;top:28.5px" width="14" height="14" viewBox="0 0 14 14"><path d="M0.800 13 L1.600 9.200 L8.600 2.200 L11.800 5.400 L4.800 12.300z" fill="#f5c44c" stroke="#9a7324" stroke-width="1"/><path d="M3 9.400 L8.800 3.600" stroke="#fff4c4" stroke-width="1.300"/><path d="M4.600 11 L10.400 5.200" stroke="#e6a52e" stroke-width="1.200"/><path d="M8.600 2.200 L10.100 0.800 L13.200 3.900 L11.800 5.400z" fill="#f2a9a0" stroke="#9a7324" stroke-width=".9"/><path d="M0.700 13.200 L1.500 10.200 L3.700 12.400z" fill="#2e2e22"/></svg><a class="abs" style="left:170.5px;top:23px">管理</a><svg class="abs" style="left:208.8px;top:27px" width="13" height="13" viewBox="0 0 13 13"><path d="M1.600 1.600 L11.400 11.400 M11.400 1.600 L1.600 11.400" stroke="#fb0d14" stroke-width="2.700" stroke-linecap="round"/></svg><a class="abs" style="left:227px;top:23px">删除</a><svg class="abs" style="left:266.5px;top:26.3px" width="16" height="16" viewBox="0 0 16 16"><circle cx="8" cy="8" r="6.400" fill="none" stroke="#7c7c7c" stroke-width="2" stroke-dasharray="3.300 1.730" stroke-dashoffset="1.600"/><circle cx="8" cy="8" r="5.500" fill="#f6f6f6" stroke="#6e6e6e" stroke-width="1"/><circle cx="8" cy="8" r="2.200" fill="#fdfdfd" stroke="#5a5a5a" stroke-width="1.400"/></svg><a class="abs" style="left:285.5px;top:23px">登录</a></div></td></tr>
<tr><td><span class="cb2"></span><span class="uid n">162338</span></td><td><svg class="av" width="37" height="46" viewBox="0 0 37 46"><g filter="url(#bl)"><rect x="-2" y="-2" width="41" height="50" fill="#e9e5de"/><path d="M3 -2 V34 M9 -2 V20 M30 -2 V20 M35 -2 V34" stroke="#f7f5f1" stroke-width="2.400"/><path d="M6 -2 V30 M33 -2 V30" stroke="#d5d0c8" stroke-width="1.400"/><path d="M20 1 C12 1 10 7 10 15 L9 25 L7 35 L3 48 L17 48 L14 35 L12 21 L26 8 L28 18 L27 26 L23 30 L28 32 L34 35 C32 25 32 14 29 8 C27 3 24 1 20 1z" fill="#2f2523"/><ellipse cx="19" cy="18.200" rx="8" ry="10.400" transform="rotate(-12 19 18.200)" fill="#f7e5dd"/><path d="M11 14 C13 5 24 4 28 10 C22 8 15 9 11 14z" fill="#3a2c2a"/><path d="M26 16 L29 18 L27 23 L25 22z" fill="#f2d8cc"/><path d="M14 27 L24 26 L25 33 L15 33z" fill="#f3dcd0"/><path d="M-2 31 L5 30 L5 37 L-2 38z" fill="#f0dcc8"/><path d="M-2 37 L6 35 L14 32 L24 31 L34 35 L38 40 L38 48 L-2 48z" fill="#0e0d0f"/><path d="M23 32 L28 30 L33 35 L28 37z" fill="#e9c9b2"/><path d="M30 40 L37 38 L37 45 L32 45z" fill="#f4f4f4"/><ellipse cx="14.200" cy="13.600" rx="1.600" ry=".8" fill="#5a4040"/><ellipse cx="21.400" cy="15.800" rx="1.600" ry=".8" fill="#5a4040"/><ellipse cx="15.600" cy="22.500" rx="2.300" ry="1.100" transform="rotate(15 15.600 22.500)" fill="#ec5038"/></g></svg></td><td><svg class="ic fem" width="11" height="16" viewBox="0 0 11 16"><rect x="2.6" y="0.400" width="5.600" height="5.400" rx=".8" fill="#e23a8c"/><rect x="4.200" y="1.700" width="2.400" height="1.800" rx=".6" fill="#ffd9ea"/><rect x="0.300" y="5.400" width="10.200" height="5.200" rx="1" fill="#f970b2"/><rect x="2.600" y="10.200" width="5.600" height="5.200" rx=".6" fill="#ec4797"/><rect x="2.600" y="14.200" width="5.600" height="1.200" fill="#dc2f80"/></svg><span class="nm">最後de雪</span></td><td><span class="n" style="letter-spacing:1.5px">--</span></td><td><span class="n">43</span></td><td>未婚</td><td>上海 徐汇</td><td><span class="n" style="letter-spacing:1px">2013/01/22</span><br><span class="n" style="letter-spacing:.2px">15:33:20</span></td><td><span class="n">0</span></td><td><span class="n">0</span></td><td><span class="n">0</span></td><td><svg class="ic okk" width="25" height="18" viewBox="0 0 25 18"><circle cx="13" cy="9" r="7.600" fill="url(#gc)" stroke="#5d685d" stroke-width="1.100"/><path d="M8.300 6.700 L14.200 12.200 L23.400 3.200" fill="none" stroke="#1d8f35" stroke-width="4.200"/><path d="M8.900 6.900 L14.200 11.800 L22.800 3.400" fill="none" stroke="#0fe640" stroke-width="2.300"/></svg></td><td><svg class="ic grr" width="17" height="17" viewBox="0 0 17 17"><circle cx="8.500" cy="8.500" r="7.700" fill="url(#gg)" stroke="#6f6f6f" stroke-width="1.300"/><circle cx="8.500" cy="8.500" r="3.700" fill="#dedede" stroke="#aeaeae" stroke-width="1.300"/></svg></td><td class="op"><div class="opw"><svg class="abs" style="left:27px;top:24px" width="20" height="19" viewBox="0 0 20 19"><circle cx="9.700" cy="9" r="8.800" fill="#4a9a47"/><circle cx="9.700" cy="9" r="7.500" fill="url(#gp)"/><circle cx="9.700" cy="9" r="7.500" fill="none" stroke="#a5dc9f" stroke-width=".7" opacity=".7"/><path d="M8.400 5.200h2.600v2.500h2.500v2.600h-2.500v2.500h-2.600v-2.500h-2.500v-2.600h2.500z" fill="#fff"/></svg><a class="abs" style="left:51.5px;top:23px">现金</a><svg class="abs" style="left:90px;top:24px" width="20" height="19" viewBox="0 0 20 19"><circle cx="9.700" cy="9" r="8.800" fill="#4a9a47"/><circle cx="9.700" cy="9" r="7.500" fill="url(#gp)"/><circle cx="9.700" cy="9" r="7.500" fill="none" stroke="#a5dc9f" stroke-width=".7" opacity=".7"/><path d="M8.400 5.200h2.600v2.500h2.500v2.600h-2.500v2.500h-2.600v-2.500h-2.500v-2.600h2.500z" fill="#fff"/></svg><a class="abs" style="left:114px;top:23px">积分</a><svg class="abs" style="left:153.5px;top:28.5px" width="14" height="14" viewBox="0 0 14 14"><path d="M0.800 13 L1.600 9.200 L8.600 2.200 L11.800 5.400 L4.800 12.300z" fill="#f5c44c" stroke="#9a7324" stroke-width="1"/><path d="M3 9.400 L8.800 3.600" stroke="#fff4c4" stroke-width="1.300"/><path d="M4.600 11 L10.400 5.200" stroke="#e6a52e" stroke-width="1.200"/><path d="M8.600 2.200 L10.100 0.800 L13.200 3.900 L11.800 5.400z" fill="#f2a9a0" stroke="#9a7324" stroke-width=".9"/><path d="M0.700 13.200 L1.500 10.200 L3.700 12.400z" fill="#2e2e22"/></svg><a class="abs" style="left:170.5px;top:23px">管理</a><svg class="abs" style="left:208.8px;top:27px" width="13" height="13" viewBox="0 0 13 13"><path d="M1.600 1.600 L11.400 11.400 M11.400 1.600 L1.600 11.400" stroke="#fb0d14" stroke-width="2.700" stroke-linecap="round"/></svg><a class="abs" style="left:227px;top:23px">删除</a><svg class="abs" style="left:266.5px;top:26.3px" width="16" height="16" viewBox="0 0 16 16"><circle cx="8" cy="8" r="6.400" fill="none" stroke="#7c7c7c" stroke-width="2" stroke-dasharray="3.300 1.730" stroke-dashoffset="1.600"/><circle cx="8" cy="8" r="5.500" fill="#f6f6f6" stroke="#6e6e6e" stroke-width="1"/><circle cx="8" cy="8" r="2.200" fill="#fdfdfd" stroke="#5a5a5a" stroke-width="1.400"/></svg><a class="abs" style="left:285.5px;top:23px">登录</a></div></td></tr>
<tr><td><span class="cb2"></span><span class="uid n">162337</span></td><td></td><td><svg class="ic fem" width="11" height="16" viewBox="0 0 11 16"><rect x="2.6" y="0.400" width="5.600" height="5.400" rx=".8" fill="#e23a8c"/><rect x="4.200" y="1.700" width="2.400" height="1.800" rx=".6" fill="#ffd9ea"/><rect x="0.300" y="5.400" width="10.200" height="5.200" rx="1" fill="#f970b2"/><rect x="2.600" y="10.200" width="5.600" height="5.200" rx=".6" fill="#ec4797"/><rect x="2.600" y="14.200" width="5.600" height="1.200" fill="#dc2f80"/></svg><span class="nm">小雨</span></td><td><span class="n" style="letter-spacing:1.5px">--</span></td><td><span class="n">40</span></td><td>未婚</td><td>上海 徐汇</td><td><span class="n" style="letter-spacing:1px">2013/01/22</span><br><span class="n" style="letter-spacing:.2px">15:33:15</span></td><td><span class="n">0</span></td><td><span class="n">0</span></td><td><span class="n">0</span></td><td><svg class="ic okk" width="25" height="18" viewBox="0 0 25 18"><circle cx="13" cy="9" r="7.600" fill="url(#gc)" stroke="#5d685d" stroke-width="1.100"/><path d="M8.300 6.700 L14.200 12.200 L23.400 3.200" fill="none" stroke="#1d8f35" stroke-width="4.200"/><path d="M8.900 6.900 L14.200 11.800 L22.800 3.400" fill="none" stroke="#0fe640" stroke-width="2.300"/></svg></td><td><svg class="ic grr" width="17" height="17" viewBox="0 0 17 17"><circle cx="8.500" cy="8.500" r="7.700" fill="url(#gg)" stroke="#6f6f6f" stroke-width="1.300"/><circle cx="8.500" cy="8.500" r="3.700" fill="#dedede" stroke="#aeaeae" stroke-width="1.300"/></svg></td><td class="op"><div class="opw"><svg class="abs" style="left:27px;top:24px" width="20" height="19" viewBox="0 0 20 19"><circle cx="9.700" cy="9" r="8.800" fill="#4a9a47"/><circle cx="9.700" cy="9" r="7.500" fill="url(#gp)"/><circle cx="9.700" cy="9" r="7.500" fill="none" stroke="#a5dc9f" stroke-width=".7" opacity=".7"/><path d="M8.400 5.200h2.600v2.500h2.500v2.600h-2.500v2.500h-2.600v-2.500h-2.500v-2.600h2.500z" fill="#fff"/></svg><a class="abs" style="left:51.5px;top:23px">现金</a><svg class="abs" style="left:90px;top:24px" width="20" height="19" viewBox="0 0 20 19"><circle cx="9.700" cy="9" r="8.800" fill="#4a9a47"/><circle cx="9.700" cy="9" r="7.500" fill="url(#gp)"/><circle cx="9.700" cy="9" r="7.500" fill="none" stroke="#a5dc9f" stroke-width=".7" opacity=".7"/><path d="M8.400 5.200h2.600v2.500h2.500v2.600h-2.500v2.500h-2.600v-2.500h-2.500v-2.600h2.500z" fill="#fff"/></svg><a class="abs" style="left:114px;top:23px">积分</a><svg class="abs" style="left:153.5px;top:28.5px" width="14" height="14" viewBox="0 0 14 14"><path d="M0.800 13 L1.600 9.200 L8.600 2.200 L11.800 5.400 L4.800 12.300z" fill="#f5c44c" stroke="#9a7324" stroke-width="1"/><path d="M3 9.400 L8.800 3.600" stroke="#fff4c4" stroke-width="1.300"/><path d="M4.600 11 L10.400 5.200" stroke="#e6a52e" stroke-width="1.200"/><path d="M8.600 2.200 L10.100 0.800 L13.200 3.900 L11.800 5.400z" fill="#f2a9a0" stroke="#9a7324" stroke-width=".9"/><path d="M0.700 13.200 L1.500 10.200 L3.700 12.400z" fill="#2e2e22"/></svg><a class="abs" style="left:170.5px;top:23px">管理</a><svg class="abs" style="left:208.8px;top:27px" width="13" height="13" viewBox="0 0 13 13"><path d="M1.600 1.600 L11.400 11.400 M11.400 1.600 L1.600 11.400" stroke="#fb0d14" stroke-width="2.700" stroke-linecap="round"/></svg><a class="abs" style="left:227px;top:23px">删除</a><svg class="abs" style="left:266.5px;top:26.3px" width="16" height="16" viewBox="0 0 16 16"><circle cx="8" cy="8" r="6.400" fill="none" stroke="#7c7c7c" stroke-width="2" stroke-dasharray="3.300 1.730" stroke-dashoffset="1.600"/><circle cx="8" cy="8" r="5.500" fill="#f6f6f6" stroke="#6e6e6e" stroke-width="1"/><circle cx="8" cy="8" r="2.200" fill="#fdfdfd" stroke="#5a5a5a" stroke-width="1.400"/></svg><a class="abs" style="left:285.5px;top:23px">登录</a></div></td></tr>
</table>
</div>
<div id="ft">
<span class="abs" style="left:25px;top:9px;color:#666">快捷操作:</span>
<a class="abs" style="left:105px;top:9px">审核会员</a>
<span class="abs" style="left:169.5px;top:8px;font-size:17.5px">|</span>
<a class="abs" style="left:182.5px;top:9px">审核头像</a>
<span class="abs" style="left:247.0px;top:8px;font-size:17.5px">|</span>
<a class="abs" style="left:260px;top:9px">审核独白</a>
<span class="abs" style="left:324.5px;top:8px;font-size:17.5px">|</span>
<a class="abs" style="left:337px;top:9px">审核相册</a>
<span class="abs" style="left:401.5px;top:8px;font-size:17.5px">|</span>
<a class="abs" style="left:414px;top:9px">视频认证</a>
<span class="abs" style="left:478.5px;top:8px;font-size:17.5px">|</span>
<a class="abs" style="left:492px;top:9px">审核日记</a>
</div>
</body>
</html>
